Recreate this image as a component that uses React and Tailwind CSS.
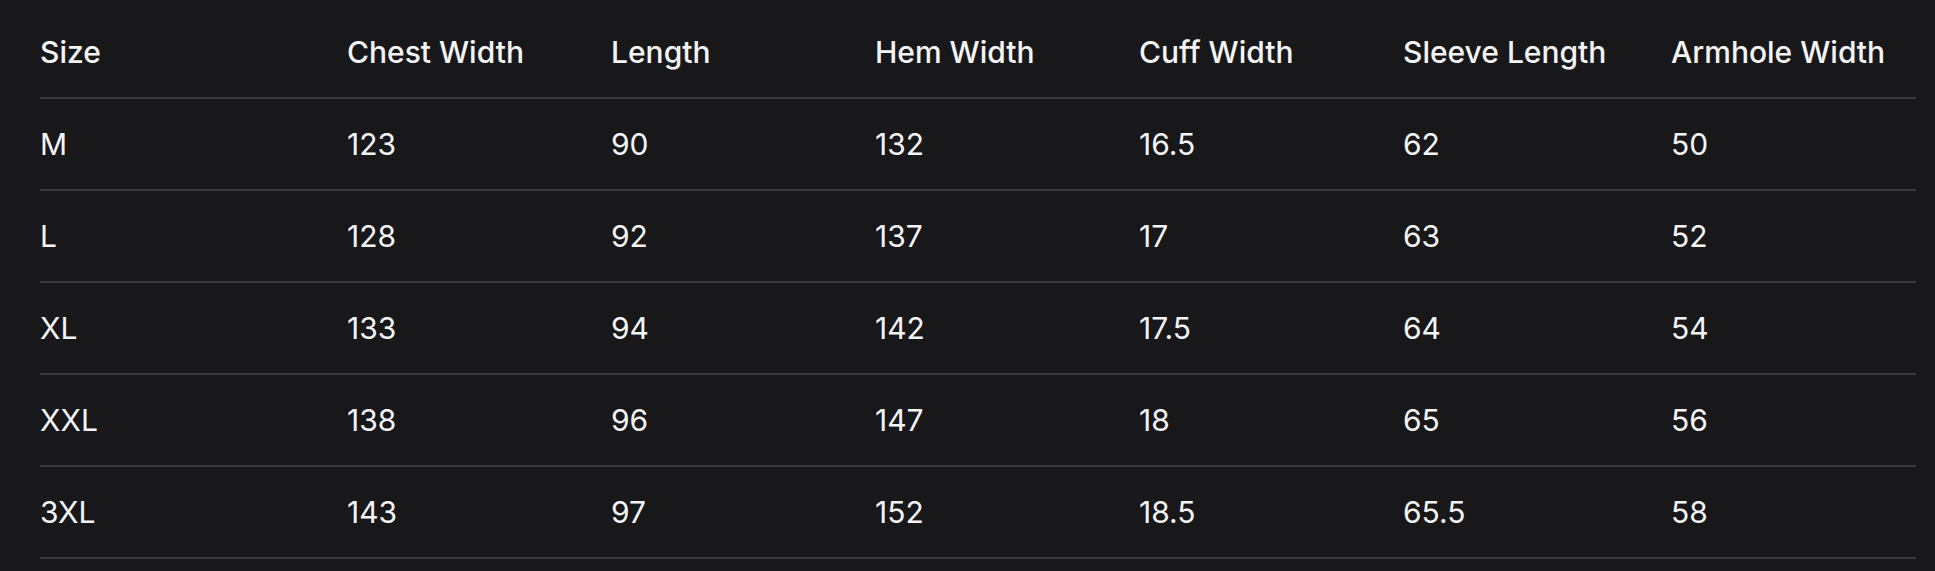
import React from 'react';

const COLUMNS = ['Size', 'Chest Width', 'Length', 'Hem Width', 'Cuff Width', 'Sleeve Length', 'Armhole Width'];
const WIDTHS = ['w-[307px]', 'w-[264px]', 'w-[264px]', 'w-[264px]', 'w-[264px]', 'w-[268px]', 'w-[245px]'];

const ROWS = [
  ['M', '123', '90', '132', '16.5', '62', '50'],
  ['L', '128', '92', '137', '17', '63', '52'],
  ['XL', '133', '94', '142', '17.5', '64', '54'],
  ['XXL', '138', '96', '147', '18', '65', '56'],
  ['3XL', '143', '97', '152', '18.5', '65.5', '58'],
];

export default function App() {
  return (
    <div className="min-h-[571px] bg-[#18181b] pl-[40px] pt-[6px] font-['Inter',sans-serif] text-[#f4f4f5]">
      <table className="table-fixed border-collapse w-[1876px] text-[30px] leading-none">
        <thead>
          <tr className="border-b-2 border-[#3a3a3e]">
            {COLUMNS.map((col, i) => (
              <th key={col} className={`${WIDTHS[i]} h-[92px] text-left font-medium whitespace-nowrap`}>{col}</th>
            ))}
          </tr>
        </thead>
        <tbody>
          {ROWS.map((row) => (
            <tr key={row[0]} className="border-b-2 border-[#3a3a3e]">
              {row.map((cell, i) => (
                <td key={i} className="h-[92px] text-left font-normal">{cell}</td>
              ))}
            </tr>
          ))}
        </tbody>
      </table>
    </div>
  );
}
